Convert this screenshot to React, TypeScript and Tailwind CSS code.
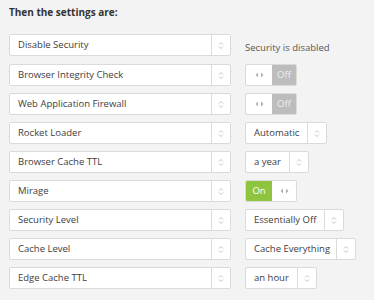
import React from 'react';

const font = { fontFamily: '"Open Sans", "Liberation Sans", sans-serif' };

const Arrows: React.FC = () => (
  <svg width="6" height="9" viewBox="0 0 6 9" className="text-[#c4c4c4]">
    <path d="M1 3.5 L3 1.5 L5 3.5" fill="none" stroke="currentColor" strokeWidth="1" />
    <path d="M1 5.5 L3 7.5 L5 5.5" fill="none" stroke="currentColor" strokeWidth="1" />
  </svg>
);

const SideArrows: React.FC<{ color?: string }> = ({ color = '#b0b0b0' }) => (
  <svg width="9" height="6" viewBox="0 0 9 6">
    <path d="M3 0.5 L0.5 3 L3 5.5 Z" fill={color} />
    <path d="M6 0.5 L8.5 3 L6 5.5 Z" fill={color} />
  </svg>
);

interface SelectProps {
  label: string;
  width: string;
}

const Select: React.FC<SelectProps> = ({ label, width }) => (
  <div className={`flex h-[22px] ${width} bg-white border border-[#dadada] rounded-[2px]`}>
    <div className="flex-1 flex items-center pl-2 text-[9.5px] text-[#3d3d3d] whitespace-nowrap">{label}</div>
    <div className="w-[19px] flex items-center justify-center border-l border-[#dadada]">
      <Arrows />
    </div>
  </div>
);

const Toggle: React.FC<{ on: boolean }> = ({ on }) => (
  <div className="flex h-[22px] w-[52px] bg-white border border-[#dadada] rounded-[2px] overflow-hidden text-[9.5px] text-white">
    {on ? (
      <>
        <div className="w-[26px] flex items-center justify-center bg-[#8fc43f]">On</div>
        <div className="flex-1 flex items-center justify-center">
          <SideArrows />
        </div>
      </>
    ) : (
      <>
        <div className="w-[26px] flex items-center justify-center">
          <SideArrows />
        </div>
        <div className="flex-1 flex items-center justify-center bg-[#bdbdbd] text-[#eeeeee]">Off</div>
      </>
    )}
  </div>
);

type Value =
  | { kind: 'text'; text: string }
  | { kind: 'toggle'; on: boolean }
  | { kind: 'select'; text: string; width: string };

const rows: { label: string; value: Value }[] = [
  { label: 'Disable Security', value: { kind: 'text', text: 'Security is disabled' } },
  { label: 'Browser Integrity Check', value: { kind: 'toggle', on: false } },
  { label: 'Web Application Firewall', value: { kind: 'toggle', on: false } },
  { label: 'Rocket Loader', value: { kind: 'select', text: 'Automatic', width: 'w-[82px]' } },
  { label: 'Browser Cache TTL', value: { kind: 'select', text: 'a year', width: 'w-[64px]' } },
  { label: 'Mirage', value: { kind: 'toggle', on: true } },
  { label: 'Security Level', value: { kind: 'select', text: 'Essentially Off', width: 'w-[99px]' } },
  { label: 'Cache Level', value: { kind: 'select', text: 'Cache Everything', width: 'w-[111px]' } },
  { label: 'Edge Cache TTL', value: { kind: 'select', text: 'an hour', width: 'w-[72px]' } },
];

export default function App() {
  return (
    <div className="w-[374px] h-[300px] bg-[#f3f3f3] overflow-hidden" style={font}>
      <div className="pl-[9px] pt-[5px] text-[10px] font-bold text-[#333] leading-[14px]">Then the settings are:</div>
      <div className="mt-[14px] flex flex-col gap-[7px]">
        {rows.map((row) => (
          <div key={row.label} className="flex items-center pl-[9px]">
            <Select label={row.label} width="w-[222px]" />
            <div className="ml-[14px]">
              {row.value.kind === 'text' && (
                <span className="text-[9.5px] text-[#555]">{row.value.text}</span>
              )}
              {row.value.kind === 'toggle' && <Toggle on={row.value.on} />}
              {row.value.kind === 'select' && (
                <Select label={row.value.text} width={row.value.width} />
              )}
            </div>
          </div>
        ))}
      </div>
    </div>
  );
}
